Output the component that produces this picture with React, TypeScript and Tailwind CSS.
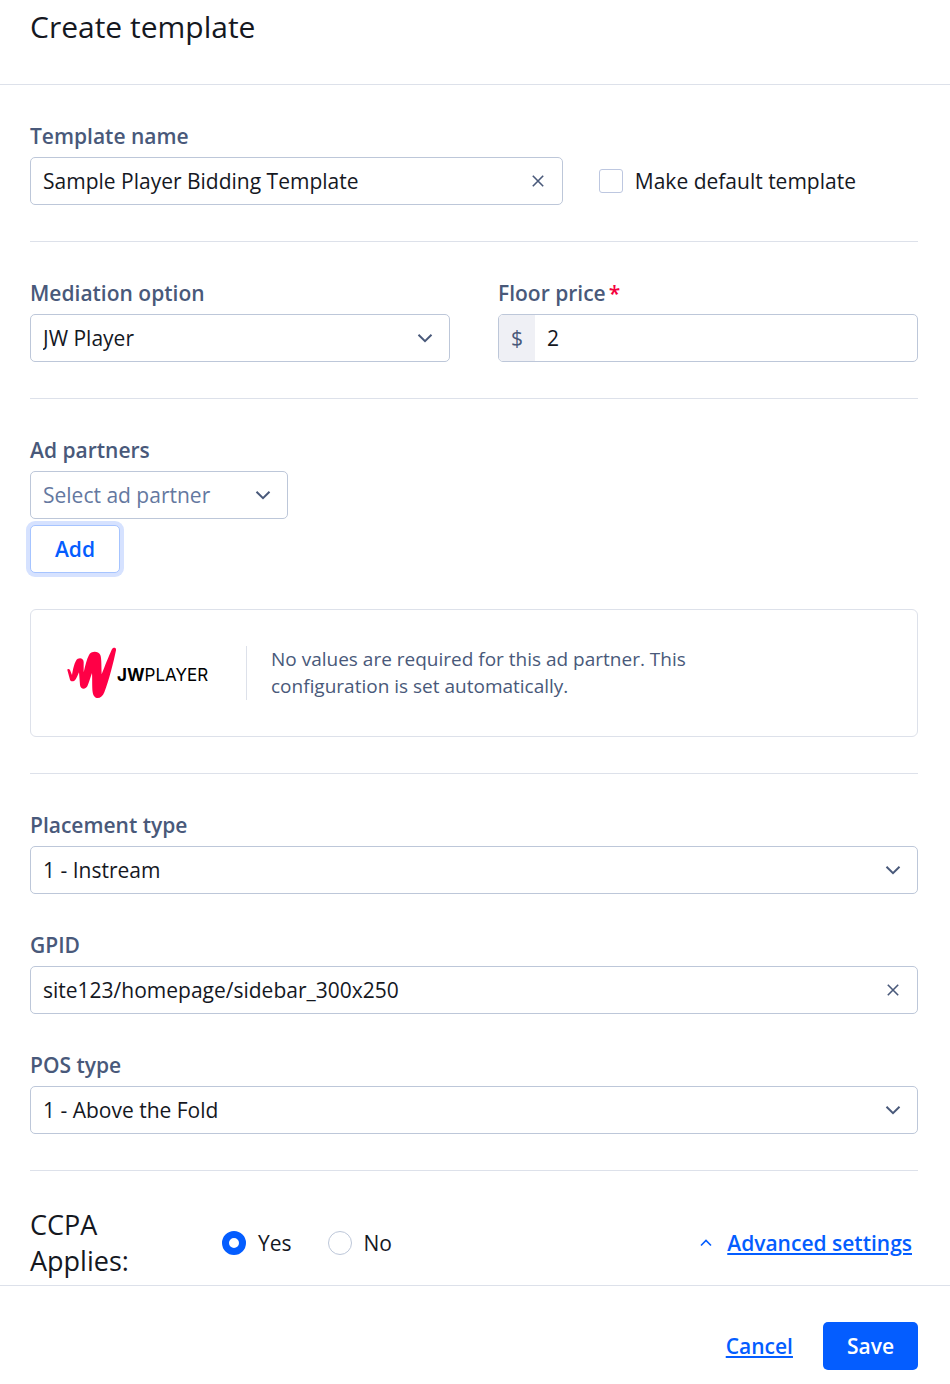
import { useState } from "react";
import type { ReactNode } from "react";
import { clsx } from "clsx";

const CONTROL =
  "h-12 w-full rounded-[5px] border border-[#bdc7d9] bg-white px-3 text-[21px] leading-[30px] outline-none focus:border-[#045dff]";

const ChevronDown = () => (
  <svg
    className="pointer-events-none absolute right-[17px] top-1/2 h-4 w-4 -translate-y-1/2"
    viewBox="0 0 16 16"
    fill="none"
    stroke="#49597a"
    strokeWidth="2"
  >
    <path d="M1.5 4.8 8 11.2 14.5 4.8" />
  </svg>
);

const JwMark = () => (
  <svg className="h-[52px] w-[50px] shrink-0" viewBox="0 0 150 156" fill="#ff0046">
    <path d="M1 69C1 65 7 65 9 69L15 84C18 66 22 49 27 41C33 31 49 31 50 45L50 76C55 56 59 36 66 24C72 12 93 10 100 24C104 34 103 60 104 82C113 58 125 28 134 8C138 0 149 1 147 10C140 44 126 100 112 136C104 158 80 160 77 136C75 120 76 94 75 78C70 92 66 107 61 118C54 130 40 126 39 114L36 76C32 86 29 93 25 98C20 105 11 104 9 98Z" />
  </svg>
);

function Field({ id, label, required, children }: { id: string; label: string; required?: boolean; children: ReactNode }) {
  return (
    <div className="flex flex-col gap-1.5">
      <label htmlFor={id} className="text-[21px] leading-[30px] font-semibold text-[#49597a]">
        {label}
        {required && <span className="ml-[3px] text-[#f4003d]">*</span>}
      </label>
      {children}
    </div>
  );
}

function ClearableInput({ id, initial }: { id: string; initial: string }) {
  const [value, setValue] = useState(initial);
  return (
    <div className="relative">
      <input id={id} type="text" value={value} onChange={(e) => setValue(e.target.value)} className={clsx(CONTROL, "pr-12")} />
      {value && (
        <button
          type="button"
          aria-label="Clear"
          onClick={() => setValue("")}
          className="absolute right-[13px] top-3 flex h-6 w-6 items-center justify-center"
        >
          <svg className="h-3 w-3" viewBox="0 0 12 12" fill="none" stroke="#49597a" strokeWidth="1.6">
            <path d="M.8.8 11.2 11.2M11.2.8.8 11.2" />
          </svg>
        </button>
      )}
    </div>
  );
}

function Select({ id, options, muted }: { id: string; options: string[]; muted?: boolean }) {
  return (
    <div className="relative">
      <select id={id} className={clsx(CONTROL, "appearance-none pr-12", muted ? "text-[#6478a0]" : "text-[#15181f]")}>
        {options.map((o) => (
          <option key={o}>{o}</option>
        ))}
      </select>
      <ChevronDown />
    </div>
  );
}

function Radio({ label, checked, onChange }: { label: string; checked: boolean; onChange: () => void }) {
  return (
    <label className="flex items-center gap-3 text-[21px] leading-[30px]">
      <input
        type="radio"
        name="ccpa"
        checked={checked}
        onChange={onChange}
        className="h-6 w-6 appearance-none rounded-full border border-[#bdc7d9] bg-white checked:border-[7px] checked:border-[#045dff]"
      />
      {label}
    </label>
  );
}

export default function App() {
  const [ccpa, setCcpa] = useState("yes");

  return (
    <form
      className="bg-white font-['Open_Sans','Noto_Sans',sans-serif] text-[#15181f]"
      onSubmit={(e) => e.preventDefault()}
    >
      <header className="border-b border-[#dde1ea] px-[30px] pt-[9px] pb-[39px]">
        <h1 className="text-[30px] leading-9">Create template</h1>
      </header>

      <main className="pr-8 pb-1.5 pl-[30px]">
        {/* Name */}
        <section className="flex items-end gap-9 border-b border-[#dde1ea] py-9">
          <div className="w-3/5">
            <Field id="name" label="Template name">
              <ClearableInput id="name" initial="Sample Player Bidding Template" />
            </Field>
          </div>
          <label className="flex h-12 items-center gap-3 text-[21px] leading-[30px]">
            <input
              type="checkbox"
              className="h-6 w-6 appearance-none rounded-[3px] border border-[#bdc7e0] bg-white checked:bg-[#045dff]"
            />
            Make default template
          </label>
        </section>

        {/* Mediation */}
        <section className="grid grid-cols-2 gap-12 border-b border-[#dde1ea] py-9">
          <Field id="mediation" label="Mediation option">
            <Select id="mediation" options={["JW Player", "Google Ad Manager"]} />
          </Field>
          <Field id="floor" label="Floor price" required>
            <div className="flex h-12 overflow-hidden rounded-[5px] border border-[#bdc7d9] text-[21px] leading-[30px]">
              <span className="flex w-9 items-center justify-center bg-[#eff0f5] text-[#49597a]">$</span>
              <input id="floor" type="text" defaultValue="2" className="min-w-0 flex-1 px-3 outline-none" />
            </div>
          </Field>
        </section>

        {/* Partners */}
        <section className="border-b border-[#dde1ea] py-9">
          <div className="w-[258px]">
            <Field id="partner" label="Ad partners">
              <Select id="partner" options={["Select ad partner", "JW Player"]} muted />
            </Field>
          </div>
          <button
            type="button"
            className="mt-1.5 flex h-12 w-[90px] items-center justify-center rounded-[5px] border border-[#a6c4ff] bg-white text-[21px] leading-[30px] font-semibold text-[#045dff] ring-4 ring-[#d6e2ff]"
          >
            Add
          </button>
          <div className="mt-9 flex items-center rounded-md border border-[#dde1ea] p-9">
            <div className="flex w-[143px] shrink-0 items-center">
              <JwMark />
              <span className="pt-1 font-['Inter',sans-serif] text-[17px] leading-6 text-black">
                <b>JW</b>PLAYER
              </span>
            </div>
            <p className="ml-9 max-w-[480px] border-l border-[#dde1ea] pl-6 text-[19px] leading-[27px] text-[#49597a]">
              No values are required for this ad partner. This configuration is set automatically.
            </p>
          </div>
        </section>

        {/* Placement */}
        <section className="flex flex-col gap-9 border-b border-[#dde1ea] py-9">
          <Field id="placement" label="Placement type">
            <Select id="placement" options={["1 - Instream", "2 - Accompanying Content", "3 - Interstitial"]} />
          </Field>
          <Field id="gpid" label="GPID">
            <ClearableInput id="gpid" initial="site123/homepage/sidebar_300x250" />
          </Field>
          <Field id="pos" label="POS type">
            <Select id="pos" options={["1 - Above the Fold", "3 - Below the Fold"]} />
          </Field>
        </section>

        {/* CCPA */}
        <section className="flex items-center pt-9 pr-1.5">
          <h2 className="w-48 pr-12 text-[27px] leading-9">CCPA Applies:</h2>
          <div className="flex gap-9" role="radiogroup" aria-label="CCPA Applies">
            <Radio label="Yes" checked={ccpa === "yes"} onChange={() => setCcpa("yes")} />
            <Radio label="No" checked={ccpa === "no"} onChange={() => setCcpa("no")} />
          </div>
          <a href="#advanced" className="ml-auto flex items-center gap-[15px] text-[21px] leading-[30px] font-semibold text-[#045dff]">
            <svg className="h-3 w-3" viewBox="0 0 12 12" fill="none" stroke="currentColor" strokeWidth="1.6">
              <path d="M1 8.5 6 3.5 11 8.5" />
            </svg>
            <span className="underline decoration-2 underline-offset-2">Advanced settings</span>
          </a>
        </section>
      </main>

      <footer className="flex items-center justify-end gap-[30px] border-t border-[#dde1ea] pt-9 pr-8 pb-3.5">
        <button type="button" className="text-[21px] leading-[30px] font-semibold text-[#045dff] underline decoration-2 underline-offset-2">
          Cancel
        </button>
        <button type="submit" className="h-12 rounded-[5px] bg-[#045dff] px-6 text-[21px] leading-[30px] font-semibold text-white">
          Save
        </button>
      </footer>
    </form>
  );
}
